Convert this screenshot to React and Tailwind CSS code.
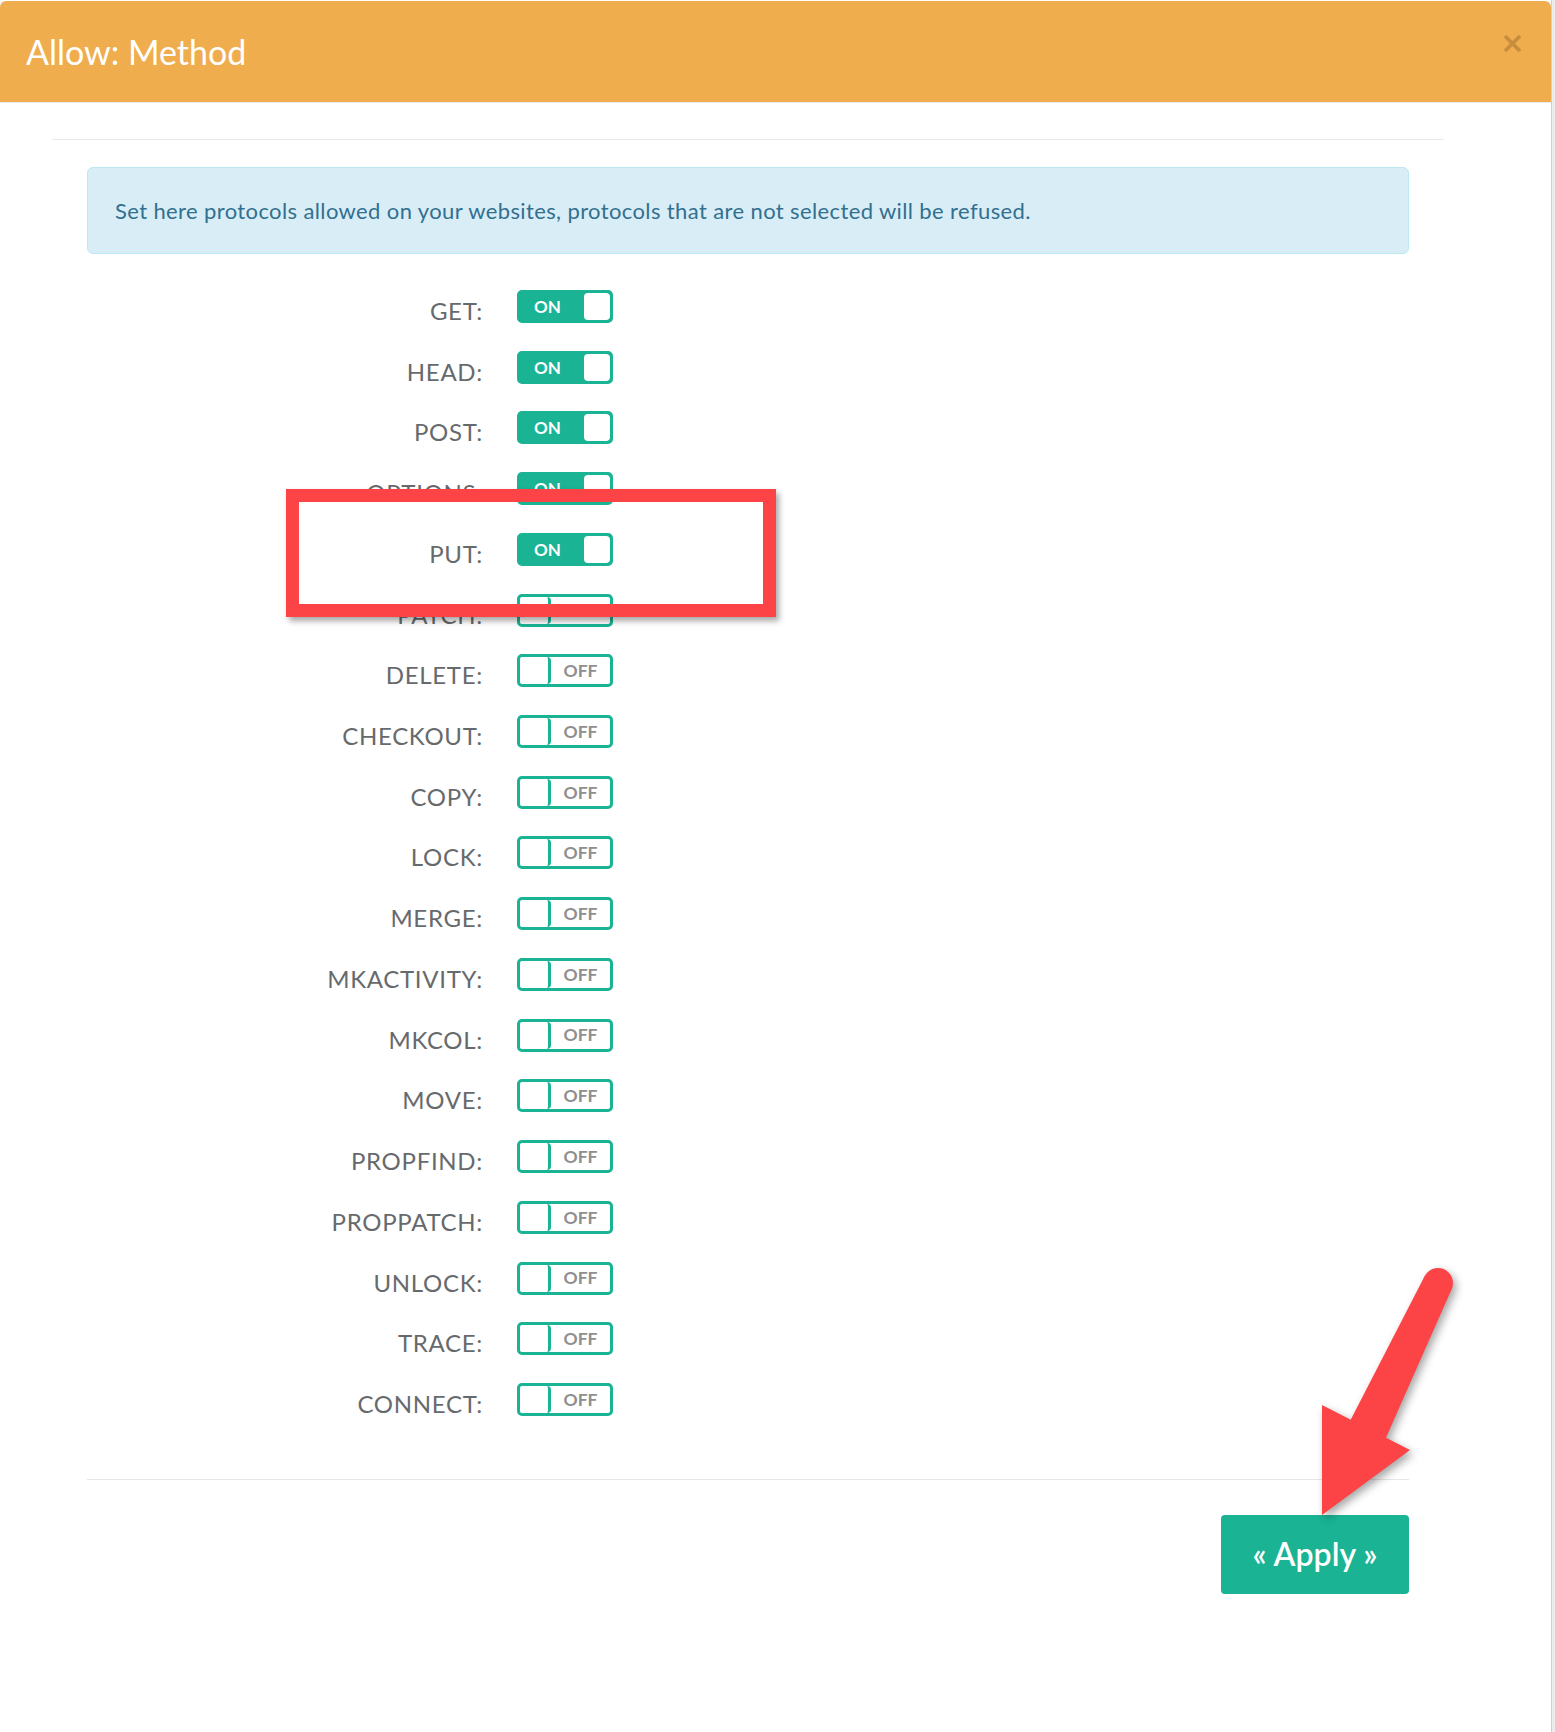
import React from "react";

const methods = [
  { name: "GET", on: true },
  { name: "HEAD", on: true },
  { name: "POST", on: true },
  { name: "OPTIONS", on: true },
  { name: "PUT", on: true },
  { name: "PATCH", on: false },
  { name: "DELETE", on: false },
  { name: "CHECKOUT", on: false },
  { name: "COPY", on: false },
  { name: "LOCK", on: false },
  { name: "MERGE", on: false },
  { name: "MKACTIVITY", on: false },
  { name: "MKCOL", on: false },
  { name: "MOVE", on: false },
  { name: "PROPFIND", on: false },
  { name: "PROPPATCH", on: false },
  { name: "UNLOCK", on: false },
  { name: "TRACE", on: false },
  { name: "CONNECT", on: false },
];

const Switch = ({ on }) => {
  if (on) {
    return (
      <div className="flex w-[96px] h-[33px] rounded-[5px] border-[3px] border-[#1ab394] bg-[#1ab394] overflow-hidden">
        <div className="flex-1 flex items-center justify-center text-white font-bold text-[17px] leading-none pr-[9px]">
          ON
        </div>
        <div className="w-[26px] h-full bg-white rounded-[4px]" />
      </div>
    );
  }
  return (
    <div className="flex w-[96px] h-[33px] rounded-[5px] border-[3px] border-[#1ab394] bg-white overflow-hidden">
      <div className="w-[31px] h-full bg-white rounded-[4px] border-r-[3px] border-[#1ab394]" />
      <div className="flex-1 flex items-center justify-center text-[#8f8f8f] font-bold text-[17.5px] leading-none">
        OFF
      </div>
    </div>
  );
};

const MethodRow = ({ name, on }) => (
  <div className="flex items-start h-[60.72px]">
    <div className="w-[396px] text-right text-[24px] leading-[24px] mt-[9px] tracking-[0.7px] text-[#676a6c]">
      {name}:
    </div>
    <div className="ml-[34px]">
      <Switch on={on} />
    </div>
  </div>
);

export default function App() {
  return (
    <div className="relative w-[1555px] h-[1732px] bg-white overflow-hidden flex font-['Lato',sans-serif]">
      <div className="w-[1551px] flex flex-col">
        <div className="mt-[1px] h-[102px] bg-[#efad4e] rounded-t-[6px] flex items-center justify-between pl-[26px] pr-[29px] border-b border-[#e9e9e9]">
          <h1 className="text-white text-[34px] leading-none">Allow: Method</h1>
          <svg width="19" height="19" viewBox="0 0 19 19" className="mb-[16px]">
            <path d="M2 2 L17 17 M17 2 L2 17" stroke="#c68e3e" strokeWidth="3.8" />
          </svg>
        </div>

        <div className="mt-[36px] mx-[52px] w-[1392px] h-px bg-[#e7e7e7]" />

        <div className="mt-[27px] ml-[87px] w-[1322px] h-[87px] bg-[#d9edf7] border border-[#bce8f1] rounded-[6px] flex items-center pl-[27px]">
          <p className="text-[#31708f] text-[22px] tracking-[0.38px] leading-none">
            Set here protocols allowed on your websites, protocols that are not selected will be refused.
          </p>
        </div>

        <div className="mt-[36px] ml-[87px] flex flex-col">
          {methods.map((m) => (
            <MethodRow key={m.name} name={m.name} on={m.on} />
          ))}
        </div>

        <div className="mt-[35px] ml-[87px] w-[1322px] h-px bg-[#e7e7e7]" />

        <div className="mt-[35px] ml-[87px] w-[1322px] flex justify-end">
          <button className="w-[188px] h-[79px] bg-[#1ab394] rounded-[4px] text-white text-[32px] font-semibold leading-none flex items-center justify-center">
            « Apply »
          </button>
        </div>
      </div>
      <div className="w-[4px] h-full bg-[#ececec] border-l border-[#cfcfcf]" />

      {/* highlight box around PUT */}
      <div className="absolute left-[286px] top-[489px] w-[490px] h-[128px] border-[13px] border-[#fc4346] shadow-[3px_4px_6px_rgba(0,0,0,0.35)]" />

      {/* arrow pointing at Apply */}
      <svg
        className="absolute left-0 top-0 drop-shadow-[3px_4px_4px_rgba(0,0,0,0.35)]"
        width="1555"
        height="1732"
        viewBox="0 0 1555 1732"
      >
        <circle cx="1438" cy="1283" r="15" fill="#fc4346" />
        <polygon points="1424.6,1276.3 1451.4,1289.7 1385,1440 1348,1425" fill="#fc4346" />
        <polygon points="1322,1405 1410,1450 1322,1515" fill="#fc4346" />
      </svg>
    </div>
  );
}
